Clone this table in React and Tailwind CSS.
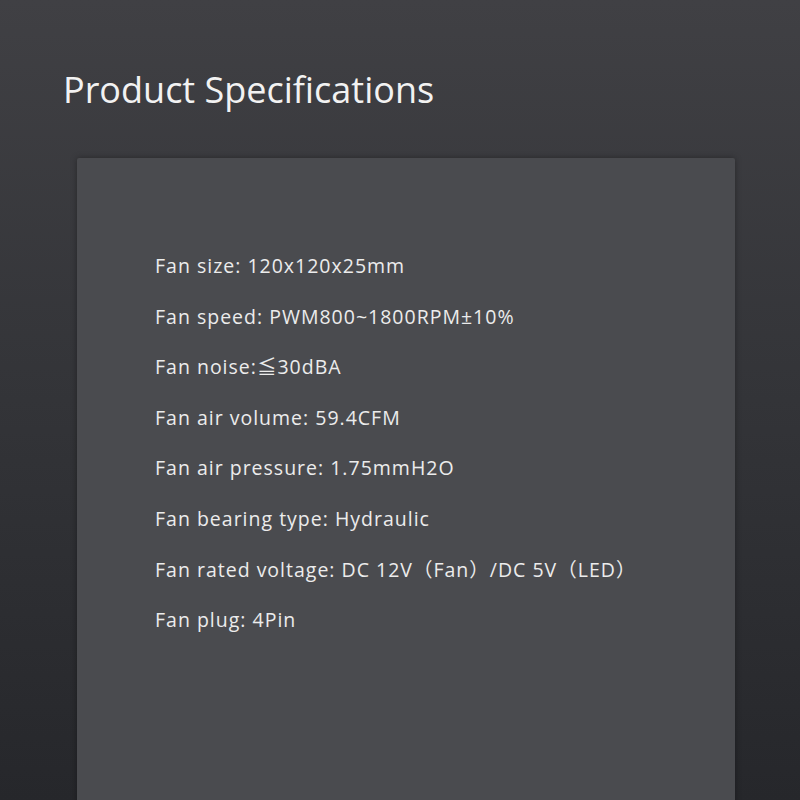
const specs = [
    'Fan size: 120x120x25mm',
    'Fan speed: PWM800~1800RPM±10%',
    'Fan noise:≦30dBA',
    'Fan air volume: 59.4CFM',
    'Fan air pressure: 1.75mmH2O',
    'Fan bearing type: Hydraulic',
    'Fan rated voltage: DC 12V（Fan）/DC 5V（LED）',
    'Fan plug: 4Pin',
];

export default function App() {
    return (
        <div className="h-[800px] w-[800px] overflow-hidden bg-gradient-to-b from-[#404044] via-[#333438] to-[#26272b]">
            <h1 className="pl-[63px] pt-[64px] font-['Open_Sans','Noto_Sans',sans-serif] text-[36px] leading-[52px] text-[#f2f2f2]">
                Product Specifications
            </h1>
            <div className="ml-[77px] mt-[42px] h-[660px] w-[658px] rounded-[2px] bg-[#4a4b4f] pl-[78px] pt-[83px] shadow-[0_0_6px_rgba(0,0,0,0.35)]">
                <ul className="font-['Open_Sans','Noto_Sans_CJK_SC',sans-serif] text-[19.5px] leading-[50.6px] tracking-[1px] text-[#ececec]">
                    {specs.map((s) => (
                        <li key={s}>{s}</li>
                    ))}
                </ul>
            </div>
        </div>
    );
}
